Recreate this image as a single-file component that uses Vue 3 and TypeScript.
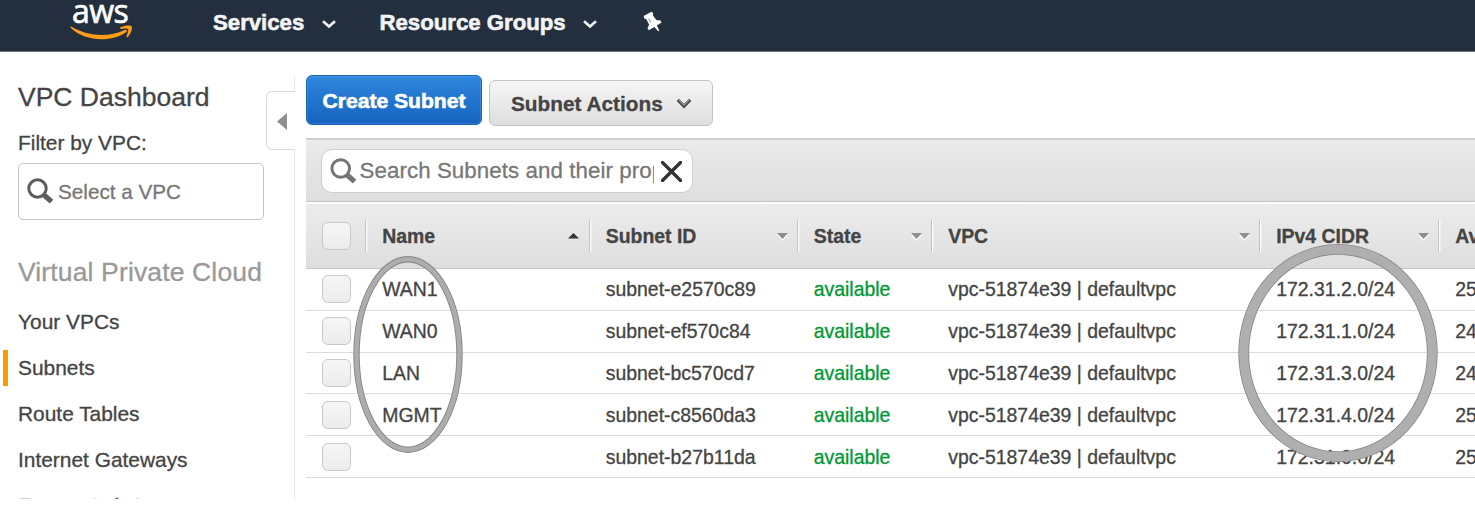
<script setup lang="ts">
interface Column {
  label: string
  sort: 'asc' | 'none' | ''
}

interface Subnet {
  name: string
  id: string
  vpc: string
  cidr: string
  ips: string
}

const vpc = 'vpc-51874e39 | defaultvpc'

const columns: Column[] = [
  { label: 'Name', sort: 'asc' },
  { label: 'Subnet ID', sort: 'none' },
  { label: 'State', sort: 'none' },
  { label: 'VPC', sort: 'none' },
  { label: 'IPv4 CIDR', sort: 'none' },
  { label: 'Av', sort: '' },
]

const subnets: Subnet[] = [
  { name: 'WAN1', id: 'subnet-e2570c89', vpc, cidr: '172.31.2.0/24', ips: '25' },
  { name: 'WAN0', id: 'subnet-ef570c84', vpc, cidr: '172.31.1.0/24', ips: '24' },
  { name: 'LAN', id: 'subnet-bc570cd7', vpc, cidr: '172.31.3.0/24', ips: '24' },
  { name: 'MGMT', id: 'subnet-c8560da3', vpc, cidr: '172.31.4.0/24', ips: '25' },
  { name: '', id: 'subnet-b27b11da', vpc, cidr: '172.31.0.0/24', ips: '25' },
]

const links = ['Your VPCs', 'Subnets', 'Route Tables', 'Internet Gateways', 'Egress Only I']
</script>

<template>
  <div class="page">
    <header class="topbar">
      <div class="logo">
        <span class="logo-text">aws</span>
        <svg class="smile" width="64" height="18" viewBox="0 0 64 18">
          <path d="M1.6 1.700C18 11.500 39 12.400 54.600 4.900C56.500 4 57.700 5.700 56.400 6.900C41 17.700 15 16.500 .8 3C.2 2.100 .7 1.200 1.600 1.700Z" fill="#ff9d17" />
          <path d="M50.500 2.300C55 .2 60.500 0 61.600 1.300C62.700 2.700 61 9.100 57.600 12.100C56.800 12.700 56.100 12.200 56.400 11.500C57.400 9.300 58.800 5.300 58.100 4.300C57.300 3.200 54 3.500 51.400 3.900C50.100 4 49.700 2.800 50.500 2.300Z" fill="#ff9d17" />
        </svg>
      </div>
      <nav class="menu">
        <span class="menu-item services">Services</span>
        <svg class="chev" width="14" height="9" viewBox="0 0 14 9"><path d="M1 1.200L7 6.500L13 1.200" fill="none" stroke="#f4f4f4" stroke-width="2.600" /></svg>
        <span class="menu-item groups">Resource Groups</span>
        <svg class="chev" width="14" height="9" viewBox="0 0 14 9"><path d="M1 1.200L7 6.500L13 1.200" fill="none" stroke="#f4f4f4" stroke-width="2.600" /></svg>
        <svg class="pin" width="20" height="22" viewBox="0 0 20 22">
          <path d="M.7 5L8.400 .8L10.200 2.100L9.900 4.600L13.600 9.300L17.200 9.300L18.600 11.400L13.800 14.500L16.400 19.800L15.200 20.300L11.300 16.100L5.800 19.200L4.500 17.400L6.100 13.500L3.300 8.200L1.200 7.600Z" fill="#fff" />
          <path d="M5.600 7.600L7.900 11.600" stroke="#7c858e" stroke-width="1" fill="none" />
        </svg>
      </nav>
    </header>

    <div class="body">
      <aside class="sidebar">
        <h1 class="title">VPC Dashboard</h1>
        <label class="filter-label">Filter by VPC:</label>
        <div class="select">
          <svg width="27" height="27" viewBox="0 0 27 27">
            <circle cx="10.500" cy="10.500" r="8.700" fill="none" stroke="#5d5d5d" stroke-width="3" />
            <path d="M17 17L24.500 23.600" stroke="#5d5d5d" stroke-width="5.200" />
          </svg>
          <span>Select a VPC</span>
        </div>
        <h2 class="section">Virtual Private Cloud</h2>
        <ul class="links">
          <li v-for="link in links" :key="link" :class="{ active: link === 'Subnets' }">{{ link }}</li>
        </ul>
      </aside>

      <div class="divider">
        <div class="divider-top"></div>
        <div class="collapse">
          <svg width="10" height="17" viewBox="0 0 10 17"><path d="M10 0V17L0 8.500Z" fill="#8f8f8f" /></svg>
        </div>
        <div class="divider-line"></div>
      </div>

      <main class="main">
        <div class="actions">
          <button class="btn primary">Create Subnet</button>
          <button class="btn plain">
            <span>Subnet Actions</span>
            <svg width="16" height="11" viewBox="0 0 16 11"><path d="M1.800 1.800L8 8.200L14.200 1.800" fill="none" stroke="#4a4a4a" stroke-width="3.200" /><path d="M2.600 1.700L8 7.200L13.400 1.700" fill="none" stroke="#999" stroke-width="1.200" /></svg>
          </button>
        </div>

        <div class="toolbar">
          <div class="search">
            <svg width="27" height="27" viewBox="0 0 27 27">
              <circle cx="10.700" cy="10.500" r="8.800" fill="none" stroke="#747474" stroke-width="3" />
              <path d="M17.200 17L24.600 23.600" stroke="#747474" stroke-width="5.200" />
            </svg>
            <span class="search-text">Search Subnets and their properties</span>
            <svg width="21" height="21" viewBox="0 0 21 21"><path d="M1.500 1.500L19.500 19.500M19.500 1.500L1.500 19.500" stroke="#333" stroke-width="3.300" stroke-linecap="round" /></svg>
          </div>
        </div>

        <div class="row head">
          <div class="cell check"><i class="box"></i></div>
          <div v-for="col in columns" :key="col.label" class="cell">
            <span>{{ col.label }}</span>
            <svg v-if="col.sort === 'asc'" class="sort asc" width="11" height="6" viewBox="0 0 11 6"><path d="M5.500 0L11 5.600H0Z" fill="#333" /></svg>
            <svg v-else-if="col.sort" class="sort" width="11" height="8" viewBox="0 0 11 8"><path d="M0 1.500H11L5.500 8Z" fill="#fff" /><path d="M0 0H11L5.500 6Z" fill="#8e8e8e" /></svg>
          </div>
        </div>
        <div v-for="s in subnets" :key="s.id" class="row data">
          <div class="cell check"><i class="box"></i></div>
          <div class="cell">{{ s.name }}</div>
          <div class="cell">{{ s.id }}</div>
          <div class="cell state">available</div>
          <div class="cell">{{ s.vpc }}</div>
          <div class="cell">{{ s.cidr }}</div>
          <div class="cell">{{ s.ips }}</div>
        </div>
      </main>
    </div>

    <svg class="marks" width="1475" height="522" viewBox="0 0 1475 522">
      <g fill="none">
        <ellipse cx="408" cy="354.500" rx="51.500" ry="95.200" stroke="#858585" stroke-width="6.400" />
        <ellipse cx="408" cy="354.500" rx="51.500" ry="95.200" stroke="#adadad" stroke-width="4.600" />
        <ellipse cx="1338" cy="353" rx="94.300" ry="103.700" stroke="#858585" stroke-width="10.800" />
        <ellipse cx="1338" cy="353" rx="94.300" ry="103.700" stroke="#afafaf" stroke-width="9.200" />
      </g>
    </svg>
  </div>
</template>

<style>
html,
body {
  margin: 0;
  background: #fff;
  overflow: hidden;
}
</style>

<style scoped>
.page {
  position: relative;
  width: 1475px;
  height: 522px;
  overflow: hidden;
  background: #fff;
  color: #444;
  font-family: "Liberation Sans", Arial, sans-serif;
  -webkit-text-stroke: 0.300px currentColor;
}
* {
  box-sizing: border-box;
}
svg {
  display: block;
  flex: none;
}
.topbar {
  display: flex;
  height: 52px;
  background: #232f3e;
  border-bottom: 1px solid #6b727b;
}
.logo {
  width: 64px;
  margin-left: 70px;
}
.logo-text {
  display: block;
  height: 26px;
  padding-left: 2px;
  line-height: 22px;
  color: #fff;
  font-family: "Open Sans", "Noto Sans", sans-serif;
  font-size: 32px;
  font-weight: 500;
  letter-spacing: -0.500px;
  -webkit-text-stroke: 0.700px #fff;
}
.smile {
  margin-top: -1px;
}
.menu {
  display: flex;
  align-items: flex-start;
  color: #f4f4f4;
  font-size: 22.200px;
  font-weight: bold;
  line-height: 26px;
  white-space: nowrap;
  -webkit-text-stroke: 0.600px #f4f4f4;
}
.menu-item {
  margin-top: 10px;
}
.services {
  width: 109px;
  margin-left: 79px;
}
.groups {
  width: 203.500px;
  margin-left: 43.500px;
}
.chev {
  margin-top: 20px;
}
.pin {
  margin: 11px 0 0 46px;
}
.body {
  display: flex;
  height: 446.500px;
  overflow: hidden;
}
.sidebar {
  width: 266px;
  flex: none;
}
.title,
.section {
  margin: 0 0 0 18px;
  font-size: 26.500px;
  font-weight: normal;
  white-space: nowrap;
}
.title {
  padding-top: 29px;
  line-height: 32px;
}
.filter-label {
  display: block;
  margin: 17px 0 0 18px;
  font-size: 20.900px;
  line-height: 26px;
}
.select {
  display: flex;
  align-items: center;
  width: 246px;
  height: 57px;
  margin: 7px 0 0 18px;
  padding-left: 8px;
  border: 1.500px solid #c4c4c4;
  border-radius: 5px;
  color: #777;
  font-size: 20.700px;
}
.select span {
  margin-left: 4px;
}
.section {
  margin-top: 36px;
  color: #999;
  line-height: 32px;
  letter-spacing: 0.140px;
}
.links {
  margin: 16px 0 0 3px;
  padding: 0;
  list-style: none;
  font-size: 20.900px;
}
.links li {
  height: 36px;
  margin-bottom: 10.100px;
  padding-left: 10px;
  border-left: 5px solid transparent;
  line-height: 36px;
  white-space: nowrap;
}
.links li.active {
  border-color: #f90;
}
.links li:last-child {
  line-height: 36px;
  letter-spacing: -0.250px;
}
.divider {
  display: flex;
  flex-direction: column;
  width: 29px;
  flex: none;
  padding-top: 24px;
}
.divider-top {
  height: 14.500px;
  border-right: 1.500px solid #e6e6e6;
}
.collapse {
  display: flex;
  align-items: center;
  height: 59px;
  padding: 2px 0 0 10px;
  border: 1.500px solid #dcdcdc;
  border-right: 0;
  border-radius: 6px 0 0 6px;
}
.divider-line {
  flex: 1;
  border-right: 1.500px solid #e6e6e6;
}
.main {
  flex: 1;
  min-width: 0;
  margin-left: 11px;
}
.actions {
  display: flex;
  height: 86px;
  padding-top: 23px;
}
.btn {
  display: flex;
  align-items: center;
  margin: 0;
  padding: 0;
  font-family: inherit;
  font-weight: bold;
  white-space: nowrap;
}
.primary {
  justify-content: center;
  width: 176px;
  height: 50px;
  padding-top: 2px;
  border: 1.500px solid #1565b5;
  border-radius: 6px;
  background: linear-gradient(#2f86dd, #1564bf);
  box-shadow: inset 0 0 0 1px rgba(255, 255, 255, 0.120);
  color: #fff;
  font-size: 21.100px;
  -webkit-text-stroke: 0.600px #fff;
}
.plain {
  width: 224px;
  height: 46px;
  margin: 5px 0 0 7px;
  padding: 1px 0 0 21px;
  border: 1.500px solid #c4c4c4;
  border-radius: 6px;
  background: linear-gradient(#f6f6f6, #dedede);
  color: #444;
  font-size: 20.800px;
  -webkit-text-stroke: 0.300px #444;
}
.plain svg {
  margin: 0 0 0 13px;
}
.toolbar {
  height: 66px;
  padding: 9px 0 0 14.500px;
  border-top: 2px solid #cfcfcf;
  border-bottom: 2px solid #fff;
  background: linear-gradient(#ebebeb, #dedede);
  box-shadow: inset 0 -1px 0 #c4c4c4;
}
.search {
  display: flex;
  align-items: center;
  width: 372px;
  height: 44px;
  padding-left: 8px;
  border: 1.500px solid #cdcdcd;
  border-radius: 11px;
  background: #fff;
  color: #777;
}
.search-text {
  width: 294.500px;
  margin: 0 6.500px 0 3px;
  overflow: hidden;
  font-size: 22.300px;
  letter-spacing: 0.080px;
  line-height: 30px;
  white-space: nowrap;
}
.row {
  display: grid;
  grid-template-columns: 60px 223.500px 208px 134.500px 328px 179px 1fr;
  height: 41.800px;
  align-items: center;
  border-bottom: 1.500px solid #dcdcdc;
  font-size: 19.450px;
  line-height: 24px;
  white-space: nowrap;
}
.cell {
  display: flex;
  align-items: center;
  min-width: 0;
  padding-left: 16.200px;
}
.head {
  height: 65px;
  border-color: #c6c6c6;
  background: linear-gradient(#ececec, #dedede);
  font-weight: bold;
}
.head .cell {
  height: 32px;
  margin-left: -1px;
  padding-left: 16.200px;
  border-left: 1px solid #c4c4c4;
  box-shadow: inset 1.500px 0 0 #fafafa;
}
.head .cell.check {
  margin-left: 0;
  border-left: 0;
  padding-left: 16px;
  box-shadow: none;
}
.cell.check {
  padding-left: 16px;
}
.sort {
  margin: 1px 10px 0 auto;
}
.asc {
  margin-top: -1px;
  margin-right: 11px;
}
.state {
  color: #093;
}
.box {
  flex: none;
  width: 29px;
  height: 28px;
  border: 1.500px solid #c8c8c8;
  border-radius: 6px;
  background: linear-gradient(#f6f6f6, #ececec);
}
.marks {
  position: absolute;
  top: 0;
  left: 0;
  pointer-events: none;
}
</style>
